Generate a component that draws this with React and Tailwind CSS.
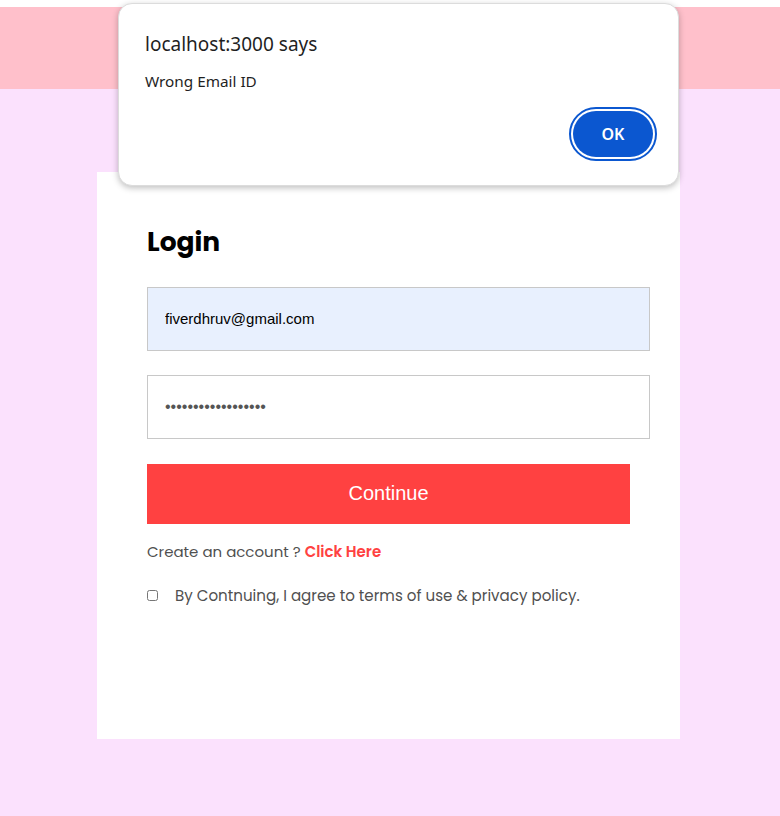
import React from "react";

export default function App() {
    return (
        <div className="relative min-h-[816px] bg-[#fbe1fd]">
            {/* Top bar */}
            <div className="h-[7px] bg-white" />
            <div className="h-[82px] bg-[#ffc0cb]" />

            {/* Login card */}
            <div className="ml-[97px] mt-[83px] h-[567px] w-[583px] bg-white px-[50px] pt-[50px]">
                <h1 className="font-['Poppins','Open_Sans',sans-serif] text-[26.5px] font-bold leading-[40px] text-black">
                    Login
                </h1>
                <input
                    type="email"
                    defaultValue="fiverdhruv@gmail.com"
                    className="mt-[25px] block h-[64px] w-[503px] border border-[#c8c8c8] bg-[#e8f0fe] px-[17px] pb-[2px] font-['Liberation_Sans',Arial,sans-serif] text-[15px] text-black outline-none"
                />
                <input
                    type="password"
                    defaultValue="ssssssssssssssssss"
                    className="mt-[24px] block h-[64px] w-[503px] border border-[#c8c8c8] bg-white px-[17px] font-['Liberation_Sans',Arial,sans-serif] text-[16px] text-[#555] outline-none"
                />
                <button className="mt-[25px] block h-[60px] w-[483px] bg-[#ff4141] pb-[2px] font-['Liberation_Sans',Arial,sans-serif] text-[20px] text-white">
                    Continue
                </button>
                <p className="mt-[17px] font-['Poppins','Open_Sans',sans-serif] text-[15px] text-[#505050]">
                    Create an account ?{" "}
                    <span className="font-semibold text-[#ff4141]">Click Here</span>
                </p>
                <label className="mt-[21px] flex items-center gap-[17px] font-['Poppins','Open_Sans',sans-serif] text-[15.1px] text-[#505050]">
                    <input type="checkbox" className="m-0 h-[11px] w-[11px]" />
                    <span>By Contnuing, I agree to terms of use &amp; privacy policy.</span>
                </label>
            </div>

            {/* Browser alert */}
            <div className="absolute left-[118px] top-[3px] h-[183px] w-[561px] rounded-[14px] border border-[#dcdcdc] bg-white px-[26px] pt-[26px] shadow-[0_2px_6px_rgba(0,0,0,0.25)]">
                <div className="font-['Noto_Sans','Open_Sans',sans-serif] text-[19px] leading-[28px] text-[#1f1f1f]">
                    localhost:3000 says
                </div>
                <div className="mt-[13px] font-['Noto_Sans','Open_Sans',sans-serif] text-[15.3px] leading-[20px] text-[#1f1f1f]">
                    Wrong Email ID
                </div>
                <div className="mt-[16px] flex justify-end">
                    <div className="-mr-[5px] rounded-full border-2 border-[#0b57d0] p-[2px]">
                        <button className="h-[46px] w-[80px] rounded-full bg-[#0b57d0] font-['Noto_Sans','Open_Sans',sans-serif] text-[16px] font-semibold text-white">
                            OK
                        </button>
                    </div>
                </div>
            </div>
        </div>
    );
}
